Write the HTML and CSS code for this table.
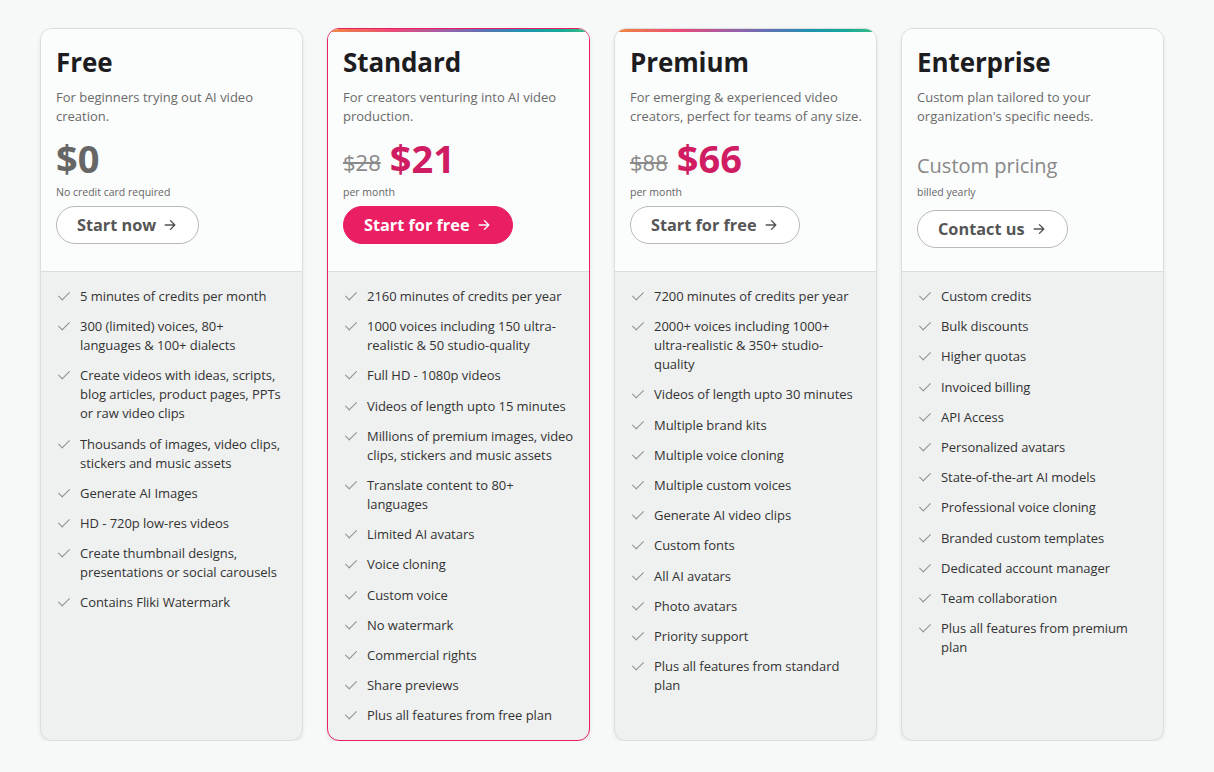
FILE: index.html
```html
<!DOCTYPE html>
<html lang="en">
<head>
<meta charset="utf-8">
<title>Pricing</title>
<link rel="stylesheet" href="styles.css">
</head>
<body>
<div class="plans">
  <div class="card">
    <div class="top">
      <h2 class="name">Free</h2>
      <p class="desc">For beginners trying out AI video creation.</p>
      <div class="price"><span class="amount gray">$0</span></div>
      <div class="note">No credit card required</div>
      <a class="btn">Start now <svg viewBox="0 0 16 16" class="arrow"><path d="M2.5 8h11M8.5 3l5 5-5 5" fill="none" stroke="currentColor" stroke-width="1.6" stroke-linecap="round" stroke-linejoin="round"/></svg></a>
    </div>
    <ul class="features">
      <li>5 minutes of credits per month</li>
      <li>300 (limited) voices, 80+ languages &amp; 100+ dialects</li>
      <li>Create videos with ideas, scripts, blog articles, product pages, PPTs or raw video clips</li>
      <li>Thousands of images, video clips, stickers and music assets</li>
      <li>Generate AI Images</li>
      <li>HD - 720p low-res videos</li>
      <li>Create thumbnail designs, presentations or social carousels</li>
      <li>Contains Fliki Watermark</li>
    </ul>
  </div>
  <div class="card featured grad">
    <div class="top">
      <h2 class="name">Standard</h2>
      <p class="desc">For creators venturing into AI video production.</p>
      <div class="price"><s class="old">$28</s><span class="amount pink">$21</span></div>
      <div class="note">per month</div>
      <a class="btn primary">Start for free <svg viewBox="0 0 16 16" class="arrow"><path d="M2.5 8h11M8.5 3l5 5-5 5" fill="none" stroke="currentColor" stroke-width="1.6" stroke-linecap="round" stroke-linejoin="round"/></svg></a>
    </div>
    <ul class="features">
      <li>2160 minutes of credits per year</li>
      <li>1000 voices including 150 ultra-realistic &amp; 50 studio-quality</li>
      <li>Full HD - 1080p videos</li>
      <li>Videos of length upto 15 minutes</li>
      <li>Millions of premium images, video clips, stickers and music assets</li>
      <li>Translate content to 80+ languages</li>
      <li>Limited AI avatars</li>
      <li>Voice cloning</li>
      <li>Custom voice</li>
      <li>No watermark</li>
      <li>Commercial rights</li>
      <li>Share previews</li>
      <li>Plus all features from free plan</li>
    </ul>
  </div>
  <div class="card grad">
    <div class="top">
      <h2 class="name">Premium</h2>
      <p class="desc">For emerging &amp; experienced video creators, perfect for teams of any size.</p>
      <div class="price"><s class="old">$88</s><span class="amount pink">$66</span></div>
      <div class="note">per month</div>
      <a class="btn">Start for free <svg viewBox="0 0 16 16" class="arrow"><path d="M2.5 8h11M8.5 3l5 5-5 5" fill="none" stroke="currentColor" stroke-width="1.6" stroke-linecap="round" stroke-linejoin="round"/></svg></a>
    </div>
    <ul class="features">
      <li>7200 minutes of credits per year</li>
      <li>2000+ voices including 1000+ ultra-realistic &amp; 350+ studio-quality</li>
      <li>Videos of length upto 30 minutes</li>
      <li>Multiple brand kits</li>
      <li>Multiple voice cloning</li>
      <li>Multiple custom voices</li>
      <li>Generate AI video clips</li>
      <li>Custom fonts</li>
      <li>All AI avatars</li>
      <li>Photo avatars</li>
      <li>Priority support</li>
      <li>Plus all features from standard plan</li>
    </ul>
  </div>
  <div class="card">
    <div class="top">
      <h2 class="name">Enterprise</h2>
      <p class="desc">Custom plan tailored to your organization's specific needs.</p>
      <div class="price custom"><span class="custom-text">Custom pricing</span></div>
      <div class="note">billed yearly</div>
      <a class="btn contact">Contact us <svg viewBox="0 0 16 16" class="arrow"><path d="M2.5 8h11M8.5 3l5 5-5 5" fill="none" stroke="currentColor" stroke-width="1.6" stroke-linecap="round" stroke-linejoin="round"/></svg></a>
    </div>
    <ul class="features">
      <li>Custom credits</li>
      <li>Bulk discounts</li>
      <li>Higher quotas</li>
      <li>Invoiced billing</li>
      <li>API Access</li>
      <li>Personalized avatars</li>
      <li>State-of-the-art AI models</li>
      <li>Professional voice cloning</li>
      <li>Branded custom templates</li>
      <li>Dedicated account manager</li>
      <li>Team collaboration</li>
      <li>Plus all features from premium plan</li>
    </ul>
  </div>
</div>
</body>
</html>
```

FILE: styles.css
```css
* { box-sizing: border-box; }
html, body { margin: 0; padding: 0; }
body {
  background: #f7f8f8;
  font-family: "Open Sans", "Noto Sans", sans-serif;
  color: #333;
}
.plans {
  display: grid;
  grid-template-columns: repeat(4, 263px);
  gap: 24px;
  margin: 28px 0 0 40px;
}
.card {
  position: relative;
  display: flex;
  flex-direction: column;
  background: #eff0f0;
  border: 1px solid #dcdddd;
  border-radius: 12px;
  overflow: hidden;
  box-shadow: 0 2px 4px rgba(0,0,0,0.08);
}
.card.featured { border-color: #e91e63; }
.card.grad::before {
  content: "";
  position: absolute;
  left: 0; right: 0; top: 0;
  height: 3px;
  background: linear-gradient(90deg, #f08a3c, #ea4a78 25%, #9c5fa8 45%, #5a73b5 60%, #1f93b0 75%, #14a99a 88%, #3bbc86);
}
.top {
  background: #fbfcfc;
  border-bottom: 1px solid #dcdddd;
  padding: 18px 8px 0 15px;
  height: 243px;
}
.name {
  margin: 0;
  font-size: 26px;
  line-height: 30px;
  font-weight: 700;
  color: #1d1d1f;
  letter-spacing: -0.1px;
}
.desc {
  margin: 11px 0 0 0;
  font-size: 13px;
  line-height: 19px;
  color: #6a6a6a;
  height: 38px;
}
.price {
  margin-top: 8px;
  height: 48px;
  display: flex;
  align-items: center;
  gap: 9px;
}
.amount {
  font-size: 38px;
  font-weight: 700;
  line-height: 40px;
}
.amount.gray { color: #666; }
.amount.pink { color: #cf1c63; }
.old {
  font-size: 22px;
  color: #8a8a8a;
  text-decoration-thickness: 2px;
  padding-top: 8px;
}
.custom-text {
  font-size: 20px;
  color: #888;
  padding-top: 14px;
}
.note {
  font-size: 10.5px;
  color: #666;
  line-height: 14px;
  margin-top: 3px;
}
.btn {
  display: inline-flex;
  align-items: center;
  gap: 7px;
  margin-top: 7px;
  height: 38px;
  padding: 0 21px 0 20px;
  border: 1px solid #b8b8b8;
  border-radius: 19px;
  font-size: 16.3px;
  font-weight: 700;
  color: #555;
  background: #fff;
}
.btn.contact { margin-top: 11px; }
.btn.primary {
  background: #e91e63;
  border-color: #e91e63;
  color: #fff;
}
.arrow { width: 14px; height: 14px; }
.features {
  list-style: none;
  margin: 0;
  padding: 15px 15px 15px 15px;
  display: flex;
  flex-direction: column;
  gap: 11.2px;
}
.features li {
  position: relative;
  padding-left: 24px;
  font-size: 13px;
  line-height: 19px;
  letter-spacing: -0.05px;
  color: #333;
}
.features li::before {
  content: "";
  position: absolute;
  left: 5px;
  top: 2px;
  width: 5px;
  height: 10px;
  border-right: 1.5px solid #8e8e8e;
  border-bottom: 1.5px solid #8e8e8e;
  transform: rotate(45deg);
}
```
